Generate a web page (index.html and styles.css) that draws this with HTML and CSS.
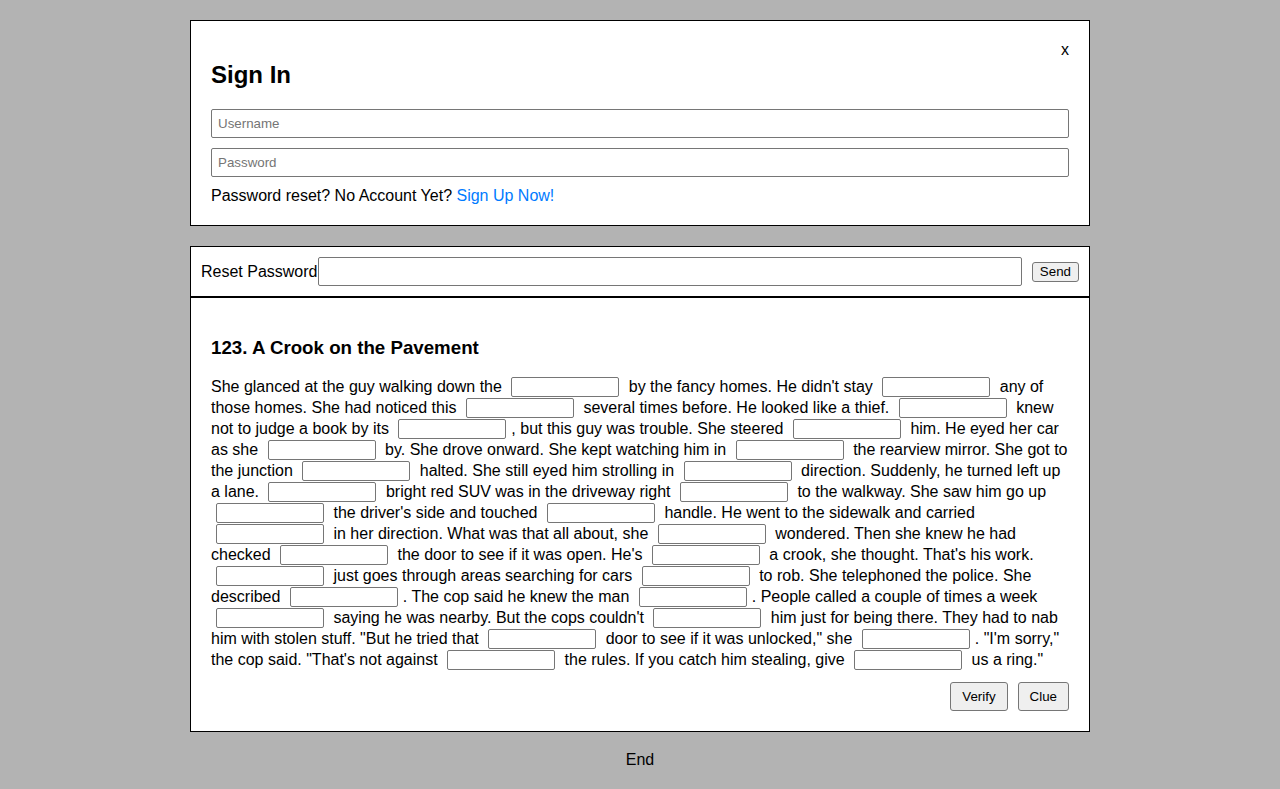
FILE: index.html
```html
<!DOCTYPE html>
<html lang="en">
<head>
<meta charset="utf-8">
<title>Sign In</title>
<link rel="stylesheet" href="styles.css">
</head>
<body>
<div class="page">
  <div class="card signin">
    <span class="close">x</span>
    <h2 class="title">Sign In</h2>
    <input class="field" type="text" placeholder="Username">
    <input class="field" type="password" placeholder="Password">
    <div class="links">Password reset? No Account Yet? <a class="signup" href="#">Sign Up Now!</a></div>
  </div>

  <div class="card reset">
    <span class="reset-label">Reset Password</span><input class="reset-input" type="text"><button class="btn send" type="button">Send</button>
  </div>
  <div class="card story">
    <h3 class="story-title">123. A Crook on the Pavement</h3>
    <div class="story-text">She glanced at the guy walking down the <input class="gap" type="text"> by the fancy homes. He didn't stay <input class="gap" type="text"> any of those homes. She had noticed this <input class="gap" type="text"> several times before. He looked like a thief. <input class="gap" type="text"> knew not to judge a book by its <input class="gap" type="text">, but this guy was trouble. She steered <input class="gap" type="text"> him. He eyed her car as she <input class="gap" type="text"> by. She drove onward. She kept watching him in <input class="gap" type="text"> the rearview mirror. She got to the junction <input class="gap" type="text"> halted. She still eyed him strolling in <input class="gap" type="text"> direction. Suddenly, he turned left up a lane. <input class="gap" type="text"> bright red SUV was in the driveway right <input class="gap" type="text"> to the walkway. She saw him go up <input class="gap" type="text"> the driver's side and touched <input class="gap" type="text"> handle. He went to the sidewalk and carried <input class="gap" type="text"> in her direction. What was that all about, she <input class="gap" type="text"> wondered. Then she knew he had checked <input class="gap" type="text"> the door to see if it was open. He's <input class="gap" type="text"> a crook, she thought. That's his work. <input class="gap" type="text"> just goes through areas searching for cars <input class="gap" type="text"> to rob. She telephoned the police. She described <input class="gap" type="text">. The cop said he knew the man <input class="gap" type="text">. People called a couple of times a week <input class="gap" type="text"> saying he was nearby. But the cops couldn't <input class="gap" type="text"> him just for being there. They had to nab him with stolen stuff. "But he tried that <input class="gap" type="text"> door to see if it was unlocked," she <input class="gap" type="text">. "I'm sorry," the cop said. "That's not against <input class="gap" type="text"> the rules. If you catch him stealing, give <input class="gap" type="text"> us a ring."</div>
    <div class="actions">
      <button class="btn big" type="button">Verify</button>
      <button class="btn big" type="button">Clue</button>
    </div>
  </div>
  <div class="end">End</div>
</div>
</body>
</html>
```
FILE: styles.css
```css
html, body {
  margin: 0;
  padding: 0;
  background: #b3b3b3;
  font-family: "Liberation Sans", Arial, sans-serif;
  font-size: 16px;
  color: #000;
}

.page {
  width: 900px;
  margin: 20px auto 0;
}

.card {
  background: #fff;
  border: 1px solid #000;
  box-sizing: border-box;
}

.signin {
  padding: 20px;
  margin-bottom: 20px;
}

.close {
  float: right;
  line-height: 18px;
  font-size: 16px;
}

.title {
  font-size: 24px;
  font-weight: bold;
  margin: 20px 0 20px;
  line-height: 28px;
}

.field {
  display: block;
  width: 100%;
  height: 29px;
  box-sizing: border-box;
  margin: 0 0 10px;
  padding: 0 6px;
  border: 1px solid #767676;
  border-radius: 2px;
  font-family: "Liberation Sans", Arial, sans-serif;
  font-size: 13.33px;
  background: #fff;
}

.field::placeholder {
  color: #757575;
}

.links {
  line-height: 18px;
}

.signup {
  color: #007bff;
  text-decoration: none;
}

.reset {
  display: flex;
  align-items: center;
  padding: 10px;
}

.reset-label {
  white-space: nowrap;
}

.reset-input {
  flex: 1;
  height: 29px;
  box-sizing: border-box;
  border: 1px solid #767676;
  border-radius: 2px;
  margin: 0;
  padding: 0 4px;
}

.btn {
  font-family: "Liberation Sans", Arial, sans-serif;
  font-size: 13.33px;
  color: #000;
  background: #efefef;
  border: 1px solid #767676;
  border-radius: 3px;
  box-sizing: border-box;
}

.send {
  margin-left: 10px;
  height: 20px;
  padding: 0 7px;
  line-height: 16px;
}

.story {
  padding: 20px;
}

.story-title {
  font-size: 18.72px;
  font-weight: bold;
  margin: 18.72px 0 17px;
  line-height: 22px;
}

.story-text {
  line-height: 21px;
}

.gap {
  width: 108px;
  height: 20px;
  box-sizing: border-box;
  margin: 1px 5px 0;
  padding: 1px 2px;
  border: 1px solid #767676;
  border-radius: 2px;
  font-size: 13.33px;
  vertical-align: top;
}

.actions {
  display: flex;
  justify-content: flex-end;
  gap: 10px;
  margin-top: 12px;
}

.big {
  height: 29px;
  padding: 0 11px;
}

.end {
  text-align: center;
  padding-top: 19px;
  line-height: 18px;
}
```
